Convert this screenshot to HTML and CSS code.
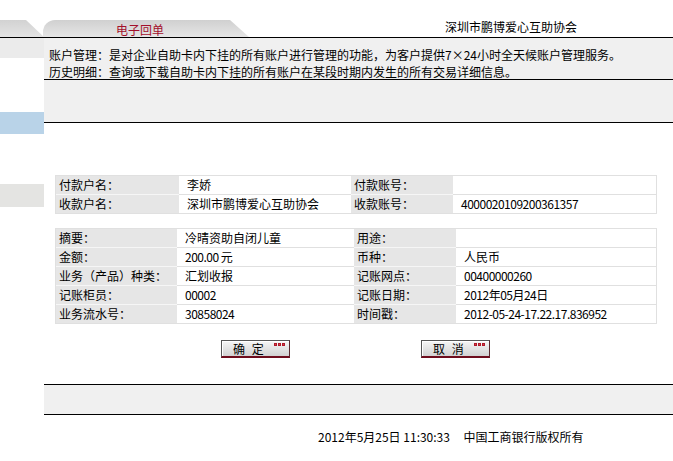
FILE: index.html
```html
<!DOCTYPE html>
<html lang="zh-CN">
<head>
<meta charset="utf-8">
<title>电子回单</title>
<link rel="stylesheet" href="styles.css">
</head>
<body>
<div class="header">
  <div class="tab-l"></div>
  <div class="tab">电子回单</div>
  <div class="org">深圳市鹏博爱心互助协会</div>
</div>
<div class="page">
  <div class="side">
    <div class="s-grey"></div>
    <div class="s-blue"></div>
    <div class="s-grey2"></div>
  </div>
  <div class="content">
    <div class="info">
      <p>账户管理：是对企业自助卡内下挂的所有账户进行管理的功能，为客户提供7×24小时全天候账户管理服务。</p>
      <p>历史明细：查询或下载自助卡内下挂的所有账户在某段时期内发生的所有交易详细信息。</p>
    </div>
    <div class="band"></div>

    <table class="t t1">
      <colgroup><col class="c1"><col class="c2"><col class="c3"><col class="c4"></colgroup>
      <tr><td class="k">付款户名：</td><td class="v">李娇</td><td class="k">付款账号：</td><td class="v"></td></tr>
      <tr><td class="k">收款户名：</td><td class="v">深圳市鹏博爱心互助协会</td><td class="k">收款账号：</td><td class="v num">4000020109200361357</td></tr>
    </table>

    <table class="t t2">
      <colgroup><col class="d1"><col class="d2"><col class="d3"><col class="d4"></colgroup>
      <tr><td class="k">摘要：</td><td class="v">冷晴资助自闭儿童</td><td class="k">用途：</td><td class="v"></td></tr>
      <tr><td class="k">金额：</td><td class="v num">200.00&nbsp;元</td><td class="k">币种：</td><td class="v">人民币</td></tr>
      <tr><td class="k">业务（产品）种类：</td><td class="v">汇划收报</td><td class="k">记账网点：</td><td class="v num">00400000260</td></tr>
      <tr><td class="k">记账柜员：</td><td class="v num">00002</td><td class="k">记账日期：</td><td class="v num">2012年05月24日</td></tr>
      <tr><td class="k">业务流水号：</td><td class="v num">30858024</td><td class="k">时间戳：</td><td class="v num">2012-05-24-17.22.17.836952</td></tr>
    </table>

    <div class="btns">
      <button class="btn" type="button"><span>确 定</span><i class="dots"><b></b><b></b><b></b></i></button>
      <button class="btn" type="button"><span>取 消</span><i class="dots"><b></b><b></b><b></b></i></button>
    </div>

    <div class="band bottom"></div>
    <div class="footer">2012年5月25日 11:30:33&nbsp;&nbsp;&nbsp;&nbsp;&nbsp;中国工商银行版权所有</div>
  </div>
</div>
</body>
</html>
```
FILE: styles.css
```css
html, body {
  margin: 0;
  padding: 0;
  background: #fff;
}
body {
  font-family: "Noto Sans CJK SC", "Noto Sans", sans-serif;
  font-size: 12px;
  color: #000;
  width: 673px;
}

/* header with tabs */
.header {
  height: 37px;
  border-bottom: 1px solid #000;
  display: flex;
  align-items: flex-end;
}
.tab-l {
  width: 44px;
  height: 17px;
  background: linear-gradient(#d2d2d2, #e4e4e4);
  clip-path: polygon(0 0, 26px 0, 44px 100%, 0 100%);
}
.tab {
  width: 206px;
  height: 17px;
  margin-left: -1px;
  box-sizing: border-box;
  padding-left: 73px;
  line-height: 19px;
  color: #a3102b;
  background: linear-gradient(#d0d0d0, #e6e6e6);
  border-top-left-radius: 12px;
  clip-path: polygon(0 0, 187px 0, 206px 100%, 0 100%);
}
.org {
  margin-left: auto;
  margin-right: 96px;
  line-height: 16px;
  margin-bottom: 2px;
}

/* body */
.page {
  display: flex;
}
.side {
  width: 44px;
  flex: none;
}
.s-grey {
  height: 20px;
  background: #ebebeb;
}
.s-blue {
  margin-top: 54px;
  height: 22px;
  background: #b9d3e8;
}
.s-grey2 {
  margin-top: 50px;
  height: 23px;
  background: #e4e4e2;
}
.content {
  flex: 1;
}
.info {
  background: #f0f0f0;
  height: 42px;
  box-sizing: border-box;
  padding: 8px 0 0 5px;
  border-bottom: 1px solid #000;
}
.info p {
  margin: 0;
  line-height: 17px;
  white-space: nowrap;
}
.band {
  background: #f0f0f0;
  height: 42px;
  border-bottom: 1px solid #000;
}
.band.bottom {
  margin-top: 26px;
  height: 29px;
  border-top: 1px solid #000;
}

/* tables */
.t {
  border-collapse: separate;
  border-spacing: 0;
  table-layout: fixed;
  width: 600px;
  margin-left: 11px;
  border: 1px solid #e0e0e0;
}
.t1 { margin-top: 52px; }
.t2 { margin-top: 14px; }
.c1 { width: 123px; }
.c2 { width: 172px; }
.c3 { width: 102px; }
.c4 { width: 203px; }
.d1 { width: 121px; }
.d2 { width: 177px; }
.d3 { width: 102px; }
.d4 { width: 200px; }
.t td {
  padding: 0;
  line-height: 18px;
  border-bottom: 1px solid #e0e0e0;
  white-space: nowrap;
  overflow: hidden;
}
.t tr:last-child td {
  border-bottom: 0;
}
.t .k {
  background: #e6e6e6;
  padding-left: 3px;
  border-bottom-color: #f6f6f6;
}
.t .v {
  padding-left: 8px;
}
.num {
  letter-spacing: -0.5px;
}

/* buttons */
.btns {
  display: flex;
  margin-top: 16px;
  padding-left: 177px;
  gap: 131px;
}
.btn {
  width: 69px;
  height: 18px;
  box-sizing: border-box;
  padding: 0 0 0 11px;
  margin: 0;
  display: flex;
  align-items: center;
  font-family: inherit;
  font-size: 12px;
  color: #000;
  background: linear-gradient(#f6f6f6, #d2d2d2);
  border: 1px solid #555;
  border-bottom: 2px solid #6e0d1d;
  border-right-color: #5a2a30;
  box-shadow: inset 1px 1px 0 #fff;
  line-height: 14px;
}
.btn span {
  white-space: pre;
  word-spacing: 4px;
}
.dots {
  display: flex;
  gap: 1px;
  margin-left: auto;
  margin-right: 4px;
  align-self: flex-start;
  margin-top: 2px;
}
.dots b {
  width: 3px;
  height: 3px;
  background: #d6404f;
  box-shadow: inset 0 0 0 1px #b01828;
}

.footer {
  padding: 14px 0 0 274px;
  line-height: 16px;
  white-space: nowrap;
}
```
